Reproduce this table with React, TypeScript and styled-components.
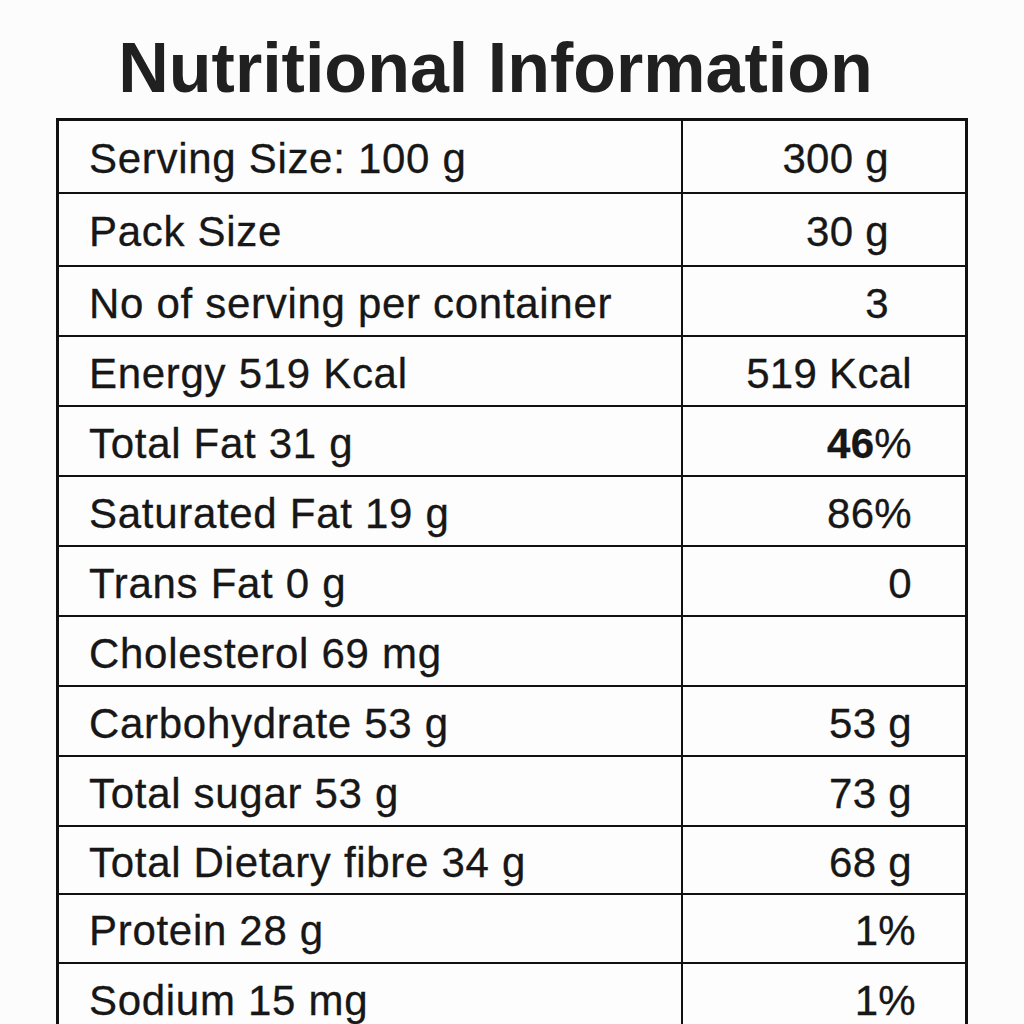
import styled, { createGlobalStyle } from "styled-components";

interface Nutrient {
  label: string;
  value: React.ReactNode;
  height: number;
  inset: number;
}

const rows: Nutrient[] = [
  { label: "Serving Size: 100 g", value: "300 g", height: 71, inset: 76 },
  { label: "Pack Size", value: "30 g", height: 71, inset: 76 },
  { label: "No of serving per container", value: "3", height: 68, inset: 76 },
  { label: "Energy 519 Kcal", value: "519 Kcal", height: 68, inset: 53 },
  {
    label: "Total Fat 31 g",
    value: (
      <>
        <strong>46</strong>%
      </>
    ),
    height: 68,
    inset: 53,
  },
  { label: "Saturated Fat 19 g", value: "86%", height: 68, inset: 53 },
  { label: "Trans Fat 0 g", value: "0", height: 68, inset: 53 },
  { label: "Cholesterol 69 mg", value: "", height: 68, inset: 53 },
  { label: "Carbohydrate 53 g", value: "53 g", height: 68, inset: 53 },
  { label: "Total sugar 53 g", value: "73 g", height: 68, inset: 53 },
  { label: "Total Dietary fibre 34 g", value: "68 g", height: 66, inset: 53 },
  { label: "Protein 28 g", value: "1%", height: 67, inset: 49 },
  { label: "Sodium 15 mg", value: "1%", height: 68, inset: 49 },
];

export default function App() {
  return (
    <>
      <GlobalStyle />
      <Page>
        <Title>Nutritional Information</Title>
        <Table>
          {rows.map((row, i) => (
            <Row key={row.label} $height={row.height} $first={i === 0}>
              <LabelCell>{row.label}</LabelCell>
              <ValueCell $inset={row.inset}>{row.value}</ValueCell>
            </Row>
          ))}
        </Table>
      </Page>
    </>
  );
}

const GlobalStyle = createGlobalStyle`
  html, body {
    margin: 0;
    padding: 0;
    background: #fcfcfc;
    overflow: hidden;
  }
  body {
    font-family: "Liberation Sans", Arial, Helvetica, sans-serif;
    color: #171717;
  }
`;

const Page = styled.div`
  width: 1024px;
  height: 1024px;
  padding-top: 28px;
  box-sizing: border-box;
  overflow: hidden;
`;

const Title = styled.h1`
  margin: 0 0 10px;
  padding-right: 33px;
  height: 80px;
  font-size: 70px;
  line-height: 80px;
  font-weight: 700;
  text-align: center;
  color: #202020;
`;

const Table = styled.div`
  width: 912px;
  margin: 0 auto;
  border: 3px solid #111;
  border-bottom: none;
  box-sizing: border-box;
  background: #fdfdfd;
`;

const Row = styled.div<{ $height: number; $first: boolean }>`
  display: grid;
  grid-template-columns: 622px 1fr;
  height: ${(p) => p.$height}px;
  border-top: ${(p) => (p.$first ? "none" : "2px solid #111")};
`;

const LabelCell = styled.div`
  display: flex;
  align-items: center;
  padding-left: 30px;
  padding-top: 5px;
  font-size: 42px;
  letter-spacing: 0.7px;
  white-space: nowrap;
  -webkit-text-stroke: 0.3px #171717;
`;

const ValueCell = styled.div<{ $inset: number }>`
  display: flex;
  align-items: center;
  justify-content: flex-end;
  padding-right: ${(p) => p.$inset}px;
  padding-top: 5px;
  border-left: 2px solid #111;
  font-size: 42px;
  letter-spacing: 0.3px;
  white-space: nowrap;
  -webkit-text-stroke: 0.3px #171717;

  strong {
    font-weight: 700;
  }
`;
